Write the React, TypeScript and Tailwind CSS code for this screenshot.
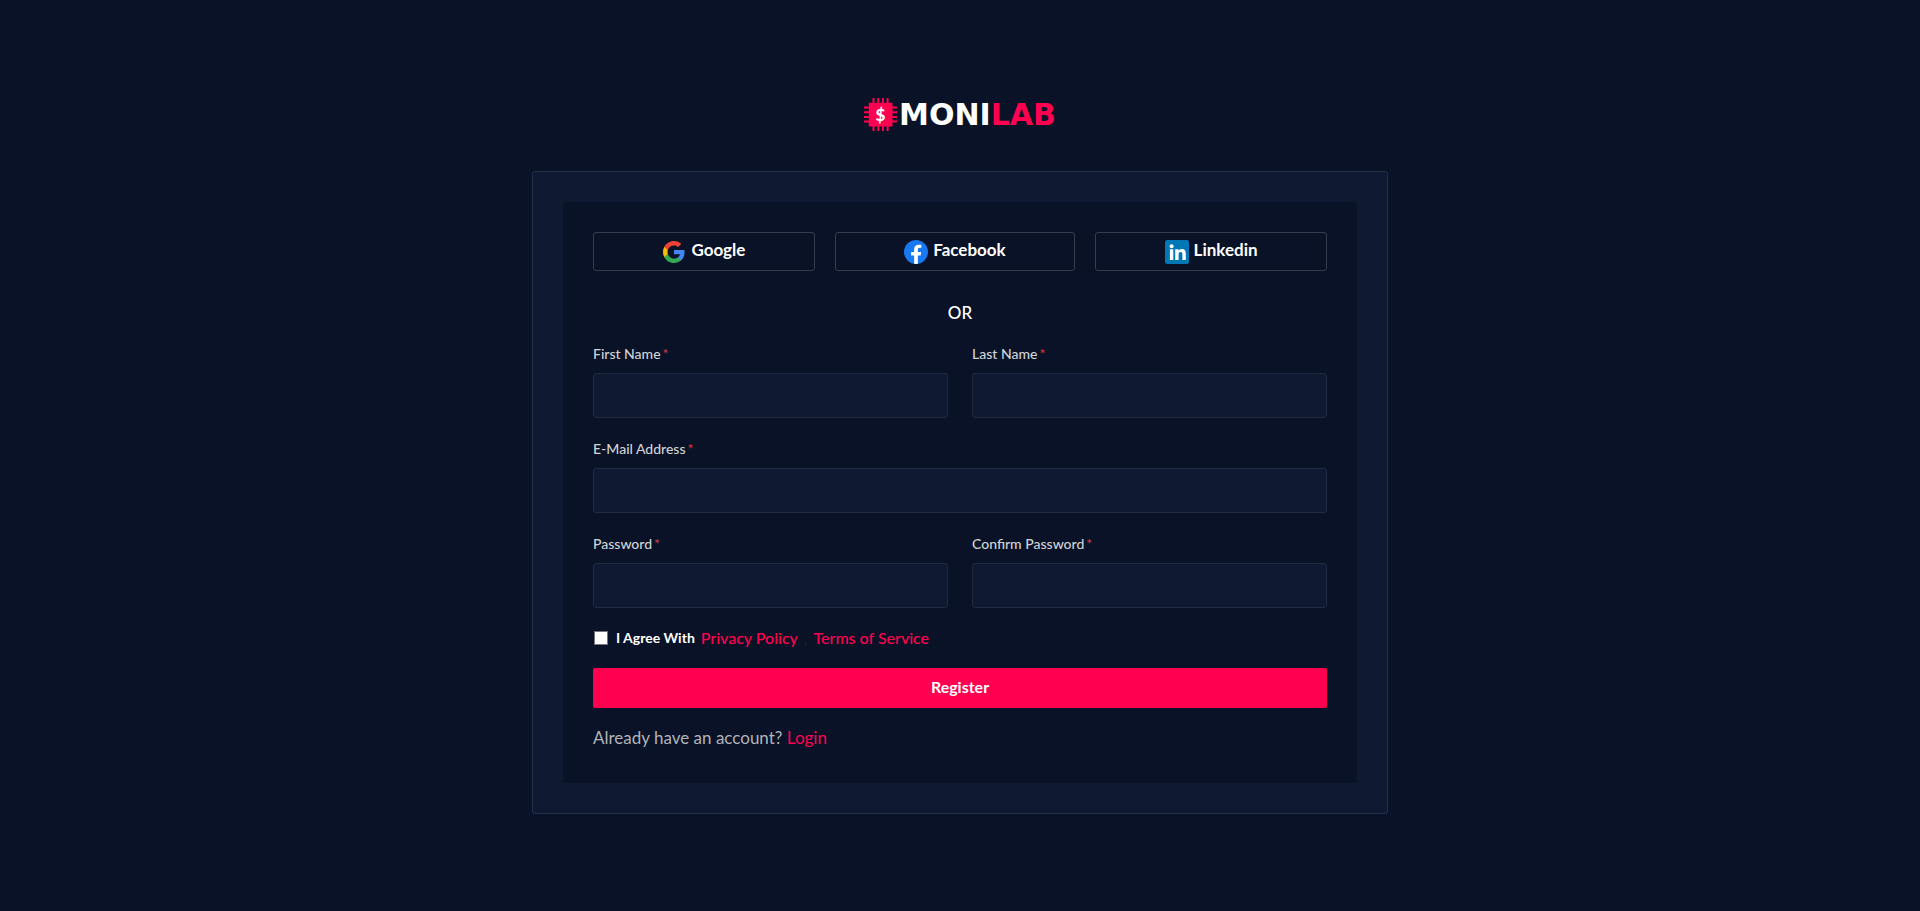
import React from "react";

const fields = [
  { id: "firstname", label: "First Name", type: "text", wide: false },
  { id: "lastname", label: "Last Name", type: "text", wide: false },
  { id: "email", label: "E-Mail Address", type: "email", wide: true },
  { id: "password", label: "Password", type: "password", wide: false },
  { id: "password_confirmation", label: "Confirm Password", type: "password", wide: false },
];

function ChipIcon() {
  return (
    <svg width="33" height="33" viewBox="0 0 33 33" aria-hidden="true">
      <path
        d="M9.5 0V33M14.2 0V33M18.9 0V33M23.6 0V33M0 9.5H33M0 14.2H33M0 18.9H33M0 23.6H33"
        stroke="#ff0150"
        strokeWidth="2"
      />
      <rect x="4.8" y="4.8" width="23.7" height="23.7" fill="#ff0150" />
      <text x="16.5" y="22.5" textAnchor="middle" fill="#fff" className="font-['Lato'] text-[17px] font-black">
        $
      </text>
    </svg>
  );
}

function GoogleIcon() {
  return (
    <svg width="24" height="24" viewBox="0 0 24 24" aria-hidden="true">
      <path
        d="M22.56 12.25c0-.78-.07-1.53-.2-2.25H12v4.26h5.92c-.26 1.37-1.04 2.53-2.21 3.31v2.77h3.57c2.08-1.92 3.28-4.74 3.28-8.09z"
        fill="#4285f4"
      />
      <path
        d="M12 23c2.97 0 5.46-.98 7.28-2.66l-3.57-2.77c-.98.66-2.23 1.06-3.71 1.06-2.86 0-5.29-1.93-6.16-4.53H2.18v2.84C3.99 20.53 7.7 23 12 23z"
        fill="#34a853"
      />
      <path
        d="M5.84 14.09c-.22-.66-.35-1.36-.35-2.09s.13-1.43.35-2.09V7.07H2.18C1.43 8.55 1 10.22 1 12s.43 3.45 1.18 4.93l3.66-2.84z"
        fill="#fbbc05"
      />
      <path
        d="M12 5.38c1.62 0 3.06.56 4.21 1.64l3.15-3.15C17.45 2.09 14.97 1 12 1 7.7 1 3.99 3.47 2.18 7.07l3.66 2.84c.87-2.6 3.3-4.53 6.16-4.53z"
        fill="#ea4335"
      />
    </svg>
  );
}

function FacebookIcon() {
  return (
    <svg width="24" height="24" viewBox="0 0 24 24" aria-hidden="true">
      <circle cx="12" cy="12" r="12" fill="#1877f2" />
      <path
        d="M16.67 15.47 17.2 12h-3.33V9.75c0-.95.47-1.88 1.96-1.88h1.51V4.92s-1.37-.23-2.69-.23c-2.74 0-4.53 1.66-4.53 4.67V12H7.08v3.47h3.04v8.38a12.1 12.1 0 0 0 3.75 0v-8.38z"
        fill="#fff"
      />
    </svg>
  );
}

function LinkedinIcon() {
  return (
    <svg width="24" height="24" viewBox="0 0 24 24" aria-hidden="true">
      <rect width="24" height="24" rx="2.5" fill="#0077b5" />
      <circle cx="6.6" cy="6.3" r="2" fill="#fff" />
      <path
        d="M4.9 9.3h3.4v10.6H4.9zM10.2 9.3h3.3v1.5c.5-.9 1.6-1.8 3.3-1.8 3.3 0 4 2.2 4 5v5.9h-3.4v-5.2c0-1.3 0-2.8-1.8-2.8s-2 1.3-2 2.7v5.3h-3.4z"
        fill="#fff"
      />
    </svg>
  );
}

const providers = [
  { name: "Google", icon: <GoogleIcon /> },
  { name: "Facebook", icon: <FacebookIcon /> },
  { name: "Linkedin", icon: <LinkedinIcon /> },
];

export default function App() {
  return (
    <div className="flex min-h-screen flex-col items-center justify-center bg-[#091226] px-4 py-10 font-['Lato',sans-serif] text-white">
      <a href="#" className="mb-10 flex items-center gap-0.5">
        <ChipIcon />
        <span className="font-['DejaVu_Sans',sans-serif] text-[30px] leading-[33px] font-bold">
          MONI<span className="text-[#ff0150]">LAB</span>
        </span>
      </a>

      <div className="w-full max-w-[856px] rounded-[3px] border border-[#262f47] bg-[#0f1931] p-[30px]">
        <form className="rounded-[3px] bg-[#091226] p-[30px]">
          {/* Social sign up */}
          <div className="flex flex-wrap gap-5">
            {providers.map((p) => (
              <button
                key={p.name}
                type="button"
                className="flex h-[39px] flex-auto items-center justify-center gap-[5px] rounded-[3px] border border-[#363e4e] pt-0.5 text-[17px] font-bold"
              >
                {p.icon}
                <span className="pb-1">{p.name}</span>
              </button>
            ))}
          </div>

          <p className="mt-[30px] text-center text-[17px] leading-6 font-medium">OR</p>

          <div className="mt-[18px] grid grid-cols-2 gap-x-6 gap-y-5">
            {fields.map((f) => (
              <div key={f.id} className={f.wide ? "col-span-2" : ""}>
                <label htmlFor={f.id} className="mb-2 block text-sm leading-[22px] font-medium text-[#d0d2d6]">
                  {f.label}
                  <span className="ml-0.5 text-[#dc3545]">*</span>
                </label>
                <input
                  id={f.id}
                  type={f.type}
                  className="block h-[45px] w-full rounded-[3px] border border-[#212a3f] bg-[#0f1931] px-4 text-sm outline-none"
                />
              </div>
            ))}
          </div>

          <div className="mt-5 flex h-5 items-center">
            <input
              id="agree"
              type="checkbox"
              className="mr-2 ml-px size-3.5 appearance-none border border-[#767676] bg-white"
            />
            <label htmlFor="agree" className="mr-1.5 text-sm font-bold">
              I Agree With
            </label>
            <a href="#" className="text-base font-medium text-[#ff0150]">
              Privacy Policy
            </a>
            <span className="mx-1.5 text-[#212529]">,</span>
            <a href="#" className="text-base font-medium text-[#ff0150]">
              Terms of Service
            </a>
          </div>

          <button
            type="submit"
            className="mt-5 block h-10 w-full rounded-[2px] bg-[#ff0150] pb-0.5 text-base font-bold"
          >
            Register
          </button>

          <p className="mt-[18px] mb-[3px] text-[17px] leading-6 text-[#b1b4ba]">
            Already have an account?{" "}
            <a href="#" className="text-[#ff0150]">
              Login
            </a>
          </p>
        </form>
      </div>
    </div>
  );
}
